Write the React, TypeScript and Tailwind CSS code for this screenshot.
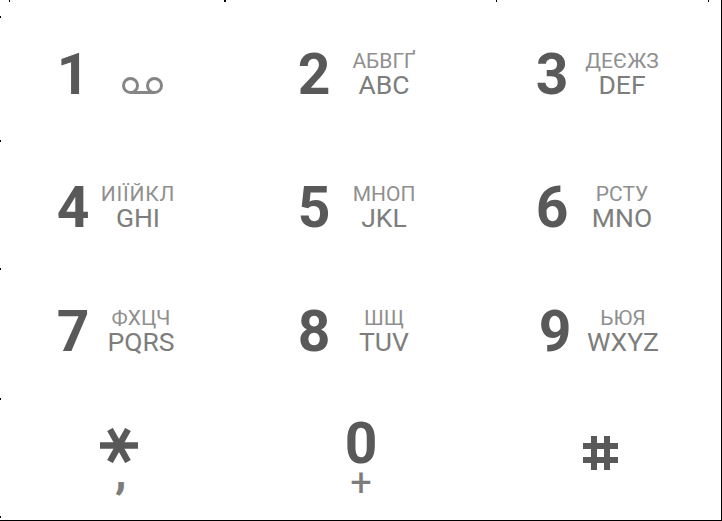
type KeyDef = { n: string; top?: string; bottom?: string; pad?: string; gap?: string; topCls?: string }

const keys: KeyDef[] = [
  { n: "1", pad: "pl-[51px]", gap: "ml-[7px]" },
  { n: "2", top: "АБВГҐ", bottom: "ABC" },
  { n: "3", top: "ДЕЄЖЗ", bottom: "DEF" },
  { n: "4", top: "ИІЇЙКЛ", bottom: "GHI", pad: "pl-[51px]", gap: "ml-[3px]", topCls: "tracking-[0.8px]" },
  { n: "5", top: "МНОП", bottom: "JKL" },
  { n: "6", top: "РСТУ", bottom: "MNO" },
  { n: "7", top: "ФХЦЧ", bottom: "PQRS", pad: "pl-[51px]", gap: "ml-[6px]" },
  { n: "8", top: "ШЩ", bottom: "TUV" },
  { n: "9", top: "ЬЮЯ", bottom: "WXYZ", pad: "pl-[53px]", gap: "ml-[6px]" },
]

// stray 1px marks along the top and left edge of the capture
const ticks = [
  "left-[9px] top-0 w-px h-[2px]",
  "left-[224px] top-0 w-[2px] h-[2px]",
  "left-[496px] top-0 w-px h-[2px]",
  "left-[708px] top-0 w-px h-[2px]",
  "left-0 top-[16px] w-px h-[2px]",
  "left-0 top-[140px] w-px h-[2px]",
  "left-0 top-[268px] w-px h-[2px]",
  "left-0 top-[398px] w-px h-[2px]",
  "left-0 top-[516px] w-px h-[2px]",
]

function Voicemail() {
  return (
    <svg width="41" height="17" viewBox="0 0 41 17" fill="none" stroke="#858585" strokeWidth="3" className="mt-[23px]">
      <circle cx="8.5" cy="8.5" r="7" />
      <circle cx="32.5" cy="8.5" r="7" />
      <path d="M8.5 15.5h24" />
    </svg>
  )
}

function Key({ k }: { k: KeyDef }) {
  return (
    <div className={`flex items-center ${k.pad ?? "pl-[50px]"}`}>
      <span className="text-[57px] leading-none font-bold text-[#595959] w-[44px] text-center">{k.n}</span>
      <div className={`flex flex-col items-center w-[80px] ${k.gap ?? "ml-[8px]"}`}>
        {k.top ? (
          <div className="flex flex-col items-center -mt-[3px]">
            <span className={`text-[21px] leading-[24px] text-[#8f8f8f] whitespace-nowrap ${k.topCls ?? ""}`}>{k.top}</span>
            <span className="text-[26.5px] leading-[24px] text-[#7d7d7d]">{k.bottom}</span>
          </div>
        ) : (
          <Voicemail />
        )}
      </div>
    </div>
  )
}

export default function App() {
  return (
    <div className="relative w-[722px] h-[521px] bg-white border-r border-b border-black font-['Roboto',sans-serif] overflow-hidden">
      <div className="grid grid-cols-[242px_238px_242px] grid-rows-[148px_118px_130px_125px]">
        {keys.map((k) => (
          <Key key={k.n} k={k} />
        ))}
        <div className="flex flex-col pl-[100px] pt-[32px]">
          <svg width="38" height="35" viewBox="0 0 38 35" fill="none" stroke="#595959" strokeWidth="6.5" role="img" aria-label="*">
            <path d="M0 17.5h38" />
            <path d="M10 1.5l18 32" />
            <path d="M28 1.5l-18 32" />
          </svg>
          <span className="text-[47px] leading-[30px] font-bold text-[#7d7d7d] -mt-[6px] pl-[15px]">,</span>
        </div>
        <div className="flex flex-col items-center pt-[18px]">
          <span className="text-[57px] leading-[60px] font-bold text-[#595959]">0</span>
          <span className="text-[38px] leading-[30px] text-[#7d7d7d] -mt-[6px]">+</span>
        </div>
        <div className="pl-[103px] pt-[40px]">
          <svg width="35" height="34" viewBox="0 0 35 34" fill="#595959" role="img" aria-label="#">
            <rect x="8" y="0" width="6" height="34" />
            <rect x="21" y="0" width="6" height="34" />
            <rect x="0" y="7" width="35" height="6" />
            <rect x="0" y="21" width="35" height="6" />
          </svg>
        </div>
      </div>
      {ticks.map((t) => (
        <span key={t} className={`absolute bg-black ${t}`} />
      ))}
    </div>
  )
}
